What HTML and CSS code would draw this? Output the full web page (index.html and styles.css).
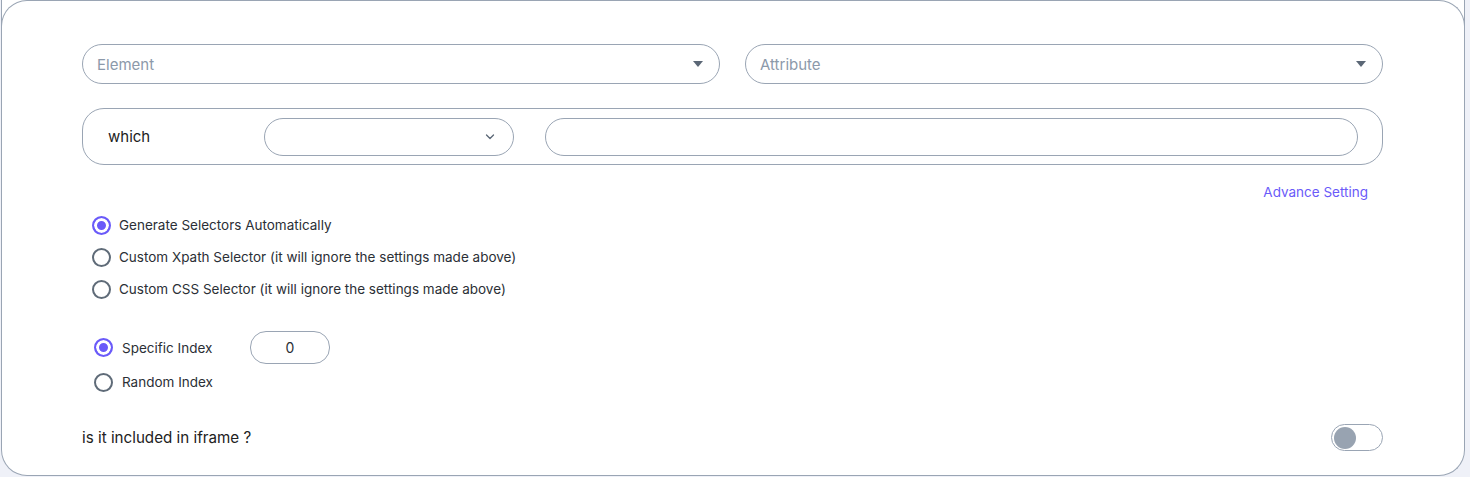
FILE: index.html
```html
<!DOCTYPE html>
<html lang="en">
<head>
  <meta charset="UTF-8">
  <meta name="viewport" content="width=device-width, initial-scale=1.0">
  <title>Element Selector</title>
  <link rel="stylesheet" href="styles.css">
</head>
<body>
  <div class="card">
    <!-- element / attribute pickers -->
    <div class="row-pickers">
      <div class="picker">
        <span class="placeholder">Element</span>
        <svg class="caret" width="10" height="6" viewBox="0 0 10 6"><path d="M0 0h10L5 6z" fill="#5b6776"/></svg>
      </div>
      <div class="picker">
        <span class="placeholder">Attribute</span>
        <svg class="caret" width="10" height="6" viewBox="0 0 10 6"><path d="M0 0h10L5 6z" fill="#5b6776"/></svg>
      </div>
    </div>

    <!-- condition -->
    <div class="condition">
      <span class="condition-label">which</span>
      <div class="cond-select">
        <svg class="chevron" width="10" height="6" viewBox="0 0 10 6"><path d="M1.5 1l3.5 3.5L8.5 1" fill="none" stroke="#5b6776" stroke-width="1.3" stroke-linecap="round" stroke-linejoin="round"/></svg>
      </div>
      <input class="cond-value" type="text">
    </div>

    <div class="advance">
      <a href="#" class="advance-link">Advance Setting</a>
    </div>

    <!-- selector mode -->
    <div class="radio-group">
      <label class="radio-row"><input type="radio" name="mode" checked> Generate Selectors Automatically</label>
      <label class="radio-row"><input type="radio" name="mode"> Custom Xpath Selector (it will ignore the settings made above)</label>
      <label class="radio-row"><input type="radio" name="mode"> Custom CSS Selector (it will ignore the settings made above)</label>
    </div>

    <!-- index -->
    <div class="index-group">
      <div class="index-row">
        <label class="radio-row index-label"><input type="radio" name="index" checked> Specific Index</label>
        <input class="index-input" type="text" value="0">
      </div>
      <label class="radio-row index-label random"><input type="radio" name="index"> Random Index</label>
    </div>

    <div class="iframe-row">
      <span>is it included in iframe ?</span>
      <span class="toggle"><span class="knob"></span></span>
    </div>
  </div>
</body>
</html>
```

FILE: styles.css
```css
/* Base */
body {
  margin: 0;
  background-color: #eff1f8;
  font-family: 'Inter', 'Liberation Sans', sans-serif;
  color: #2b2f36;
}

.card {
  box-sizing: border-box;
  width: 1464px;
  height: 476px;
  margin-left: 1px;
  background-color: #fff;
  border: 1px solid #9aa5b4;
  border-top: none;
  border-radius: 0 0 26px 26px;
  padding: 44px 81px 0 80px;
  position: relative;
}

/* top corners drawn as part of the card */
.card::before {
  content: '';
  position: absolute;
  left: -1px;
  right: -1px;
  top: 0;
  height: 40px;
  border: 1px solid #9aa5b4;
  border-bottom: none;
  border-radius: 26px 26px 0 0;
}

/* Pickers */
.row-pickers {
  display: flex;
  gap: 25px;
}

.picker {
  flex: 1;
  height: 40px;
  box-sizing: border-box;
  border: 1px solid #9aa5b4;
  border-radius: 20px;
  display: flex;
  align-items: center;
  justify-content: space-between;
  padding: 0 16px 0 14px;
}

.placeholder {
  color: #8c99aa;
  font-size: 15px;
}

/* Condition box */
.condition {
  margin-top: 24px;
  height: 57px;
  box-sizing: border-box;
  border: 1px solid #9aa5b4;
  border-radius: 22px;
  display: flex;
  align-items: center;
  padding: 0 24px 0 25px;
}

.condition-label {
  width: 156px;
  font-size: 15px;
  color: #222;
}

.cond-select {
  width: 250px;
  height: 38px;
  box-sizing: border-box;
  border: 1px solid #9aa5b4;
  border-radius: 19px;
  display: flex;
  align-items: center;
  justify-content: flex-end;
  padding-right: 18px;
}

.cond-value {
  flex: 1;
  margin-left: 31px;
  height: 38px;
  box-sizing: border-box;
  border: 1px solid #9aa5b4;
  border-radius: 19px;
  outline: none;
}

.advance {
  display: flex;
  justify-content: flex-end;
  padding-right: 15px;
  margin-top: 17px;
  height: 20px;
  line-height: 20px;
}

.advance-link {
  color: #6a5af9;
  font-size: 13.5px;
  text-decoration: none;
}

/* Radios */
.radio-group {
  margin-top: 7px;
}

.radio-row {
  display: flex;
  align-items: center;
  height: 32px;
  font-size: 13.5px;
  color: #2b2f36;
  gap: 8px;
  padding-left: 10px;
}

.radio-row input {
  appearance: none;
  margin: 0;
  width: 19px;
  height: 19px;
  border: 2px solid #5f6b78;
  border-radius: 50%;
  box-sizing: border-box;
  background: #fff;
}

.radio-row input:checked {
  border-color: #6a5af9;
  box-shadow: inset 0 0 0 3px #fff;
  background: #6a5af9;
}

.index-group {
  margin-top: 26px;
}

.index-row {
  display: flex;
  align-items: center;
}

.index-label {
  padding-left: 12px;
  gap: 9px;
  width: 156px;
}

.index-input {
  width: 80px;
  height: 33px;
  box-sizing: border-box;
  border: 1px solid #9aa5b4;
  border-radius: 16px;
  text-align: center;
  font-family: inherit;
  font-size: 14px;
  color: #2b2f36;
  outline: none;
}

.random {
  margin-top: 2px;
}

/* iframe toggle */
.iframe-row {
  margin-top: 26px;
  display: flex;
  justify-content: space-between;
  align-items: center;
  font-size: 15.2px;
  color: #222;
}

.toggle {
  width: 52px;
  height: 27px;
  box-sizing: border-box;
  border: 1px solid #9aa5b4;
  border-radius: 14px;
  display: flex;
  align-items: center;
  padding-left: 2px;
}

.knob {
  width: 22px;
  height: 22px;
  border-radius: 50%;
  background: #98a3b1;
}
```
